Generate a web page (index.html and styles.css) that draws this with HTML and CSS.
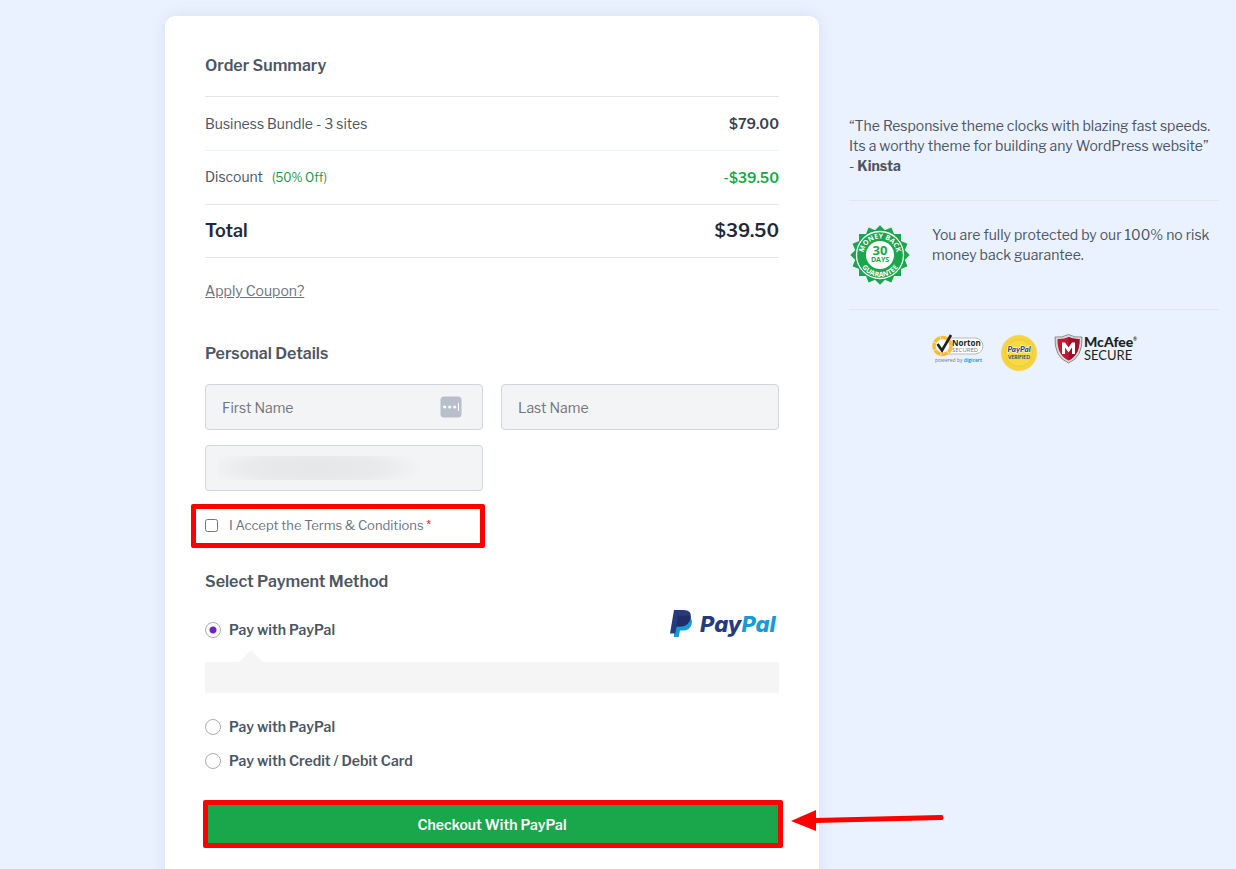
FILE: index.html
```html
<!DOCTYPE html>
<html lang="en">
<head>
  <meta charset="UTF-8" />
  <meta name="viewport" content="width=device-width, initial-scale=1.0" />
  <title>Checkout</title>
  <link rel="stylesheet" href="styles.css">
</head>
<body>
  <div class="page">
    <main class="card">
      <form>
        <h2 class="heading">Order Summary</h2>
        <table class="summary">
          <tbody>
            <tr class="item">
              <td>Business Bundle - 3 sites</td>
              <td class="price">$79.00</td>
            </tr>
            <tr class="discount">
              <td>Discount <span class="off">(50% Off)</span></td>
              <td class="price">-$39.50</td>
            </tr>
            <tr class="total">
              <td>Total</td>
              <td class="price">$39.50</td>
            </tr>
          </tbody>
        </table>
        <a class="coupon" href="#">Apply Coupon?</a>

        <h2 class="heading">Personal Details</h2>
        <div class="fields">
          <div class="field">
            <input type="text" class="form-control" placeholder="First Name" aria-label="First Name" />
            <svg class="autofill" viewBox="0 0 22 22" aria-hidden="true">
              <rect x="0.5" y="0.5" width="21" height="21" rx="3.5" fill="#b8bfca" />
              <circle cx="4.7" cy="11" r="1.6" fill="#fff" />
              <circle cx="9.7" cy="11" r="1.6" fill="#fff" />
              <circle cx="14.7" cy="11" r="1.6" fill="#fff" />
              <path d="M18.5 7v8" stroke="#fff" stroke-width="1" />
            </svg>
          </div>
          <div class="field">
            <input type="text" class="form-control" placeholder="Last Name" aria-label="Last Name" />
          </div>
          <div class="field">
            <input type="email" class="form-control" aria-label="Email" />
            <span class="smudge"></span>
          </div>
        </div>
        <div class="terms">
          <input type="checkbox" id="terms" class="check" />
          <label for="terms">I Accept the Terms &amp; Conditions <span class="required">*</span></label>
        </div>

        <h2 class="heading">Select Payment Method</h2>
        <div class="method first">
          <input type="radio" id="paypal" name="payment" class="radio" checked />
          <label for="paypal">Pay with PayPal</label>
          <svg class="paypal-logo" viewBox="0 0 110 30" role="img" aria-label="PayPal">
            <path d="M7 7h13q4 3 2.500 8.500q-1.500 6-8.500 6h-3L9.700 28H4.800z" fill="#179bd7" />
            <path d="M5 1h9.500q8.500 0 7.300 7.500q-1.500 9-10.500 9H7.800L6.300 24.500H1z" fill="#253b80" />
            <path d="M8.700 8.500q.3-1.800 2-1.800h8q1.500.2 2.900.8q0 .5-.1 1q-1.700 9-10.400 9H7.300z" fill="#222d65" />
            <text x="31" y="23" class="logo-pay">Pay<tspan class="logo-pal">Pal</tspan></text>
          </svg>
        </div>
        <div class="method-box"></div>
        <div class="method">
          <input type="radio" id="paypal2" name="payment" class="radio" />
          <label for="paypal2">Pay with PayPal</label>
        </div>
        <div class="method">
          <input type="radio" id="card" name="payment" class="radio" />
          <label for="card">Pay with Credit / Debit Card</label>
        </div>
        <div class="submit">
          <button type="submit" class="button">Checkout With PayPal</button>
          <svg class="arrow" viewBox="0 0 154 24" aria-hidden="true">
            <path d="M24 12.500L150 9.500" stroke="#f00" stroke-width="5" stroke-linecap="round" />
            <path d="M0 13L25 2v21z" fill="#f00" />
          </svg>
        </div>
      </form>
    </main>

    <aside class="sidebar">
      <p class="quote">“The Responsive theme clocks with blazing fast speeds. Its a worthy theme for building any WordPress website”<br>- <strong>Kinsta</strong></p>
      <div class="guarantee">
        <svg class="seal" viewBox="0 0 60 60" role="img" aria-label="30 days money back guarantee">
          <defs>
            <path id="arc-top" d="M13.500 30a16.500 16.500 0 0 1 33 0" />
            <path id="arc-bottom" d="M8.200 30a21.800 21.800 0 0 0 43.600 0" />
          </defs>
          <g fill="#1aa64b">
            <rect x="9" y="9" width="42" height="42" />
            <rect x="9" y="9" width="42" height="42" transform="rotate(22.500 30 30)" />
            <rect x="9" y="9" width="42" height="42" transform="rotate(45 30 30)" />
            <rect x="9" y="9" width="42" height="42" transform="rotate(67.500 30 30)" />
          </g>
          <circle cx="30" cy="30" r="23.500" fill="none" stroke="#fff" stroke-width="1.300" />
          <circle cx="30" cy="30" r="14" fill="#fff" />
          <text class="seal-ring"><textPath href="#arc-top" startOffset="50%">MONEY BACK</textPath></text>
          <text class="seal-ring"><textPath href="#arc-bottom" startOffset="50%">GUARANTEE</textPath></text>
          <text x="30" y="30" class="seal-num">30</text>
          <text x="30" y="37" class="seal-days">DAYS</text>
        </svg>
        <p>You are fully protected by our 100% no risk money back guarantee.</p>
      </div>
      <div class="trust">
        <svg class="norton" viewBox="0 0 52 30" role="img" aria-label="Norton Secured">
          <rect x="8" y="4" width="43" height="16" rx="8" fill="#fff" stroke="#b9b9b9" />
          <circle cx="10.500" cy="12" r="8.500" fill="#fff" stroke="#fdbb30" stroke-width="3.500" stroke-dasharray="7 .6" />
          <path d="M5.500 10l4.500 6.500L19 1" fill="none" stroke="#222" stroke-width="2.600" />
          <text x="20" y="12" class="norton-name">Norton</text>
          <text x="20" y="18" class="norton-sub">SECURED</text>
          <text x="3" y="28" class="norton-by">powered by <tspan class="digicert">digicert</tspan></text>
        </svg>
        <svg class="verified" viewBox="0 0 38 38" role="img" aria-label="PayPal Verified">
          <circle cx="19" cy="19" r="17.700" fill="#f5d43c" stroke="#eed567" stroke-width="1" stroke-dasharray="1.500 .8" />
          <circle cx="19" cy="19" r="13.500" fill="#f8da45" stroke="#edca38" />
          <text x="19" y="18" class="verified-name">PayPal</text>
          <text x="19" y="25" class="verified-sub">VERIFIED</text>
        </svg>
        <svg class="mcafee" viewBox="0 0 84 30" role="img" aria-label="McAfee Secure">
          <path d="M1 3q7 1 13.500-2.500Q21 4 28 3q1 20-13.500 26Q0 23 1 3z" fill="#d8d8d8" stroke="#777" stroke-width=".8" />
          <path d="M3.500 5q6 .5 11-2q5 2.500 11 2q.5 16-11 21.500Q3 21 3.500 5z" fill="#c01933" />
          <path d="M14.500 3q5 2.500 11 2q.5 16-11 21.500z" fill="#9f1030" />
          <path d="M8 20V8.500h3l3.500 5 3.500-5h3V20h-3v-6.500l-3.500 5-3.500-5V20z" fill="#fff" />
          <text x="30" y="13" class="mcafee-name">McAfee</text>
          <text x="79" y="7" class="mcafee-reg">®</text>
          <text x="30" y="26" class="mcafee-sub">SECURE</text>
        </svg>
      </div>
    </aside>
  </div>
</body>
</html>
```

FILE: styles.css
```css
* {
  box-sizing: border-box;
}
body {
  margin: 0;
  font-family: "Libre Franklin", Inter, sans-serif;
  font-size: 14px;
  line-height: 20px;
  background: #ebf2ff;
  color: #4b5563;
}
.page {
  display: grid;
  grid-template-columns: minmax(0, 1fr) 370px;
  gap: 30px;
  padding: 16px 17px 40px 165px;
}
.card {
  background: #fff;
  border-radius: 10px;
  padding: 40px;
  box-shadow: 0 0 16px rgba(60, 100, 160, 0.12);
}
.heading {
  margin: 0 0 20px;
  font-size: 16px;
  font-weight: 600;
  line-height: 20px;
}
.summary {
  width: 100%;
  border-collapse: separate;
  border-spacing: 0;
  border-top: 1px solid #e5e5e5;
}
.summary td {
  height: 54px;
  padding: 0;
  border-bottom: 1px solid #e5e5e5;
}
.summary .item td {
  border-color: #ebf2ff;
}
.summary .price {
  text-align: right;
  font-weight: 600;
  color: #374151;
}
.summary .discount .price {
  color: #1aa64b;
}
.off {
  margin-left: 6px;
  font-size: 12px;
  color: #1a9448;
}
.summary .total td {
  height: 53px;
  font-size: 18px;
  font-weight: 600;
  color: #1f2937;
}
.coupon {
  display: inline-block;
  margin: 23px 0 43px;
  color: #6b7280;
}

.fields {
  display: grid;
  grid-template-columns: 1fr 1fr;
  gap: 15px 18px;
}
.field {
  position: relative;
}
.form-control {
  display: block;
  width: 100%;
  height: 46px;
  padding: 0 16px;
  border: 1px solid #d1d5db;
  border-radius: 4px;
  background: #f3f4f6;
  font: inherit;
  color: #4b5563;
}
.form-control::placeholder {
  color: #757575;
}
.autofill {
  position: absolute;
  top: 12px;
  right: 21px;
  width: 22px;
  height: 22px;
}
.smudge {
  position: absolute;
  top: 11px;
  left: 13px;
  width: 210px;
  height: 24px;
  background: radial-gradient(ellipse 110px 24px at 46% 50%, #e5e6e8, #e9eaec 60%, #f3f4f6);
}
.terms {
  display: flex;
  align-items: center;
  gap: 11px;
  width: 294px;
  height: 44px;
  margin: 13px 0 24px -14px;
  padding: 0 0 2px 9px;
  border: 5px solid #f00;
  border-radius: 2px;
  font-size: 13px;
  color: #6b7280;
}
.check {
  width: 13px;
  height: 13px;
  margin: 0;
}
.required {
  color: #f00;
}

.method {
  display: flex;
  align-items: center;
  gap: 8px;
  height: 34px;
  font-weight: 600;
}
.method.first {
  margin-top: 21px;
}
.radio {
  appearance: none;
  width: 16px;
  height: 16px;
  margin: 0;
  border: 1px solid #a8abb0;
  border-radius: 50%;
  background: #fff;
}
.radio:checked {
  background: radial-gradient(circle, #7322c3 3px, #fff 4px);
}
.paypal-logo {
  width: 110px;
  height: 30px;
  margin: 0 0 12px auto;
}
.logo-pay {
  font: italic 800 22px Inter, sans-serif;
  fill: #253b80;
}
.logo-pal {
  fill: #179bd7;
}
.method-box {
  position: relative;
  height: 31px;
  margin: 15px 0 17px;
  border-radius: 2px;
  background: #f5f5f5;
}
.method-box::before {
  content: "";
  position: absolute;
  top: -12px;
  left: 33px;
  border: 13px solid transparent;
  border-top-width: 0;
  border-bottom-color: #f5f5f5;
}
.submit {
  position: relative;
  margin: 22px -4px 0 -2px;
}
.button {
  display: block;
  width: 100%;
  height: 48px;
  padding: 2px 2px 0 0;
  border: 5px solid #f00;
  border-radius: 2px;
  background: #1aa64b;
  color: #fff;
  font: inherit;
  font-weight: 600;
  cursor: pointer;
}
.arrow {
  position: absolute;
  top: 8px;
  left: calc(100% + 8px);
  width: 154px;
  height: 24px;
}

.sidebar {
  padding-top: 100px;
}
.sidebar p {
  margin: 0;
}
.sidebar .quote {
  padding-bottom: 24px;
}
.guarantee {
  display: flex;
  gap: 22px;
  padding: 24px 0 24px 1px;
  border: 1px solid #e0e5ee;
  border-width: 1px 0;
}
.seal {
  flex: none;
  width: 60px;
  height: 60px;
}
.seal text {
  font-family: "Open Sans", sans-serif;
  font-weight: 700;
  text-anchor: middle;
}
.seal-ring {
  font-size: 7px;
  fill: #fff;
}
.seal-num {
  font-size: 13px;
  fill: #1aa64b;
}
.seal-days {
  font-size: 7px;
  fill: #1aa64b;
}
.trust {
  display: flex;
  align-items: flex-start;
  gap: 16px;
  padding: 24px 0 0 83px;
}
.norton {
  width: 52px;
  height: 30px;
}
.norton-name {
  font: 700 8px "Open Sans", sans-serif;
  fill: #222;
}
.norton-sub {
  font: 6px "Open Sans", sans-serif;
  fill: #777;
}
.norton-by {
  font: 5px "Open Sans", sans-serif;
  fill: #777;
}
.digicert {
  font-weight: 600;
  fill: #0d84cf;
}
.verified {
  width: 38px;
  height: 38px;
}
.verified text {
  text-anchor: middle;
  fill: #28477c;
}
.verified-name {
  font: italic 900 8px Lato, sans-serif;
  stroke: #fff;
  stroke-width: 1px;
  paint-order: stroke;
}
.verified-sub {
  font: 700 5px Lato, sans-serif;
}
.mcafee {
  width: 84px;
  height: 30px;
  overflow: visible;
}
.mcafee-name {
  font: 900 14px Lato, sans-serif;
  fill: #231f20;
}
.mcafee-reg {
  font: 5px Lato, sans-serif;
}
.mcafee-sub {
  font: 13px Lato, sans-serif;
  fill: #231f20;
}
```
